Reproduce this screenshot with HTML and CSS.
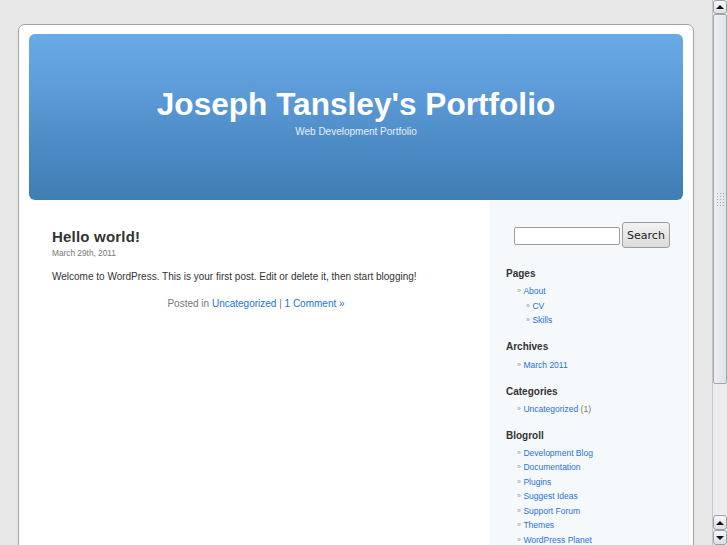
FILE: index.html
```html
<!DOCTYPE html>
<html>
<head>
<meta charset="utf-8">
<title>Joseph Tansley's Portfolio</title>
<link rel="stylesheet" href="styles.css">
</head>
<body>
<div class="viewport">
  <div class="page">
    <div class="header">
      <h1 class="site-title">Joseph Tansley's Portfolio</h1>
      <div class="site-desc">Web Development Portfolio</div>
    </div>
    <div class="body-row">
      <div class="content">
        <h2 class="post-title">Hello world!</h2>
        <div class="post-date">March 29th, 2011</div>
        <p class="post-text">Welcome to WordPress. This is your first post. Edit or delete it, then start blogging!</p>
        <p class="post-meta">Posted in <a href="#">Uncategorized</a> | <a href="#">1 Comment »</a></p>
      </div>
      <div class="sidebar">
        <form class="search">
          <input class="search-input" type="text">
          <button class="search-btn" type="button">Search</button>
        </form>
        <div class="widget">
          <h3 class="widget-title">Pages</h3>
          <ul class="list">
            <li><a href="#">About</a>
              <ul class="list sub">
                <li><a href="#">CV</a></li>
                <li><a href="#">Skills</a></li>
              </ul>
            </li>
          </ul>
        </div>
        <div class="widget">
          <h3 class="widget-title">Archives</h3>
          <ul class="list"><li><a href="#">March 2011</a></li></ul>
        </div>
        <div class="widget">
          <h3 class="widget-title">Categories</h3>
          <ul class="list"><li><a href="#">Uncategorized</a> <span class="count">(1)</span></li></ul>
        </div>
        <div class="widget">
          <h3 class="widget-title blogroll">Blogroll</h3>
          <ul class="list">
            <li><a href="#">Development Blog</a></li>
            <li><a href="#">Documentation</a></li>
            <li><a href="#">Plugins</a></li>
            <li><a href="#">Suggest Ideas</a></li>
            <li><a href="#">Support Forum</a></li>
            <li><a href="#">Themes</a></li>
            <li><a href="#">WordPress Planet</a></li>
          </ul>
        </div>
      </div>
    </div>
  </div>
</div>
<div class="scrollbar">
  <div class="sb-btn sb-up"><span class="arrow up"></span></div>
  <div class="sb-thumb"><div class="grip"></div></div>
  <div class="sb-track"></div>
  <div class="sb-btn"><span class="arrow up"></span></div>
  <div class="sb-btn"><span class="arrow down"></span></div>
</div>
</body>
</html>
```
FILE: styles.css
```css
html, body {
  margin: 0;
  padding: 0;
  height: 545px;
  overflow: hidden;
}
body {
  background: #e7e7e7;
  font-family: "Liberation Sans", Arial, sans-serif;
  display: flex;
  color: #333;
}
.viewport {
  flex: 1;
  height: 545px;
  overflow: hidden;
}
.page {
  margin: 24px 0 0 18px;
  width: 674px;
  height: 600px;
  background: #fff;
  border: 1px solid #a2a2a6;
  border-radius: 7px 7px 0 0;
  padding-top: 9px;
  box-sizing: content-box;
}
.header {
  margin: 0 10px;
  height: 166px;
  border-radius: 6px;
  background: linear-gradient(to bottom, #69aae7 0%, #5c9bd8 35%, #4a89c3 70%, #3f7db3 100%);
  text-align: center;
  color: #fff;
  overflow: hidden;
}
.site-title {
  margin: 0;
  padding-top: 52px;
  font-size: 31.6px;
  line-height: 36px;
  font-weight: bold;
  color: #fff;
}
.site-desc {
  margin-top: 4px;
  font-size: 10px;
  line-height: 12px;
  color: #e8f0fa;
}
.body-row {
  display: flex;
}
.content {
  width: 408px;
  padding: 28px 30px 0 33px;
}
.post-title {
  margin: 0;
  font-size: 15px;
  line-height: 18px;
  font-weight: bold;
  color: #333;
  letter-spacing: 0.2px;
}
.post-date {
  margin-top: 2px;
  font-size: 8.3px;
  line-height: 11px;
  color: #777;
}
.post-text {
  margin: 11px 0 0;
  font-size: 10px;
  line-height: 14px;
  color: #333;
}
.post-meta {
  margin: 13px 0 0;
  font-size: 10px;
  line-height: 14px;
  color: #777;
  text-align: center;
}
a {
  color: #2671d9;
  text-decoration: none;
}
.sidebar {
  width: 183px;
  padding: 22px 0 0 16px;
  background: #f6f9fc;
  height: 400px;
}
.search {
  margin: 0 0 0 8px;
  display: flex;
  align-items: center;
  gap: 2px;
}
.search-input {
  width: 106px;
  height: 18px;
  box-sizing: border-box;
  border: 1px solid #9c9c9c;
  border-radius: 2px;
  background: #fff;
  margin: 2px 0 0;
  padding: 0;
}
.search-btn {
  width: 48px;
  height: 26px;
  box-sizing: border-box;
  border: 1px solid #9d9d9d;
  border-radius: 3px;
  background: linear-gradient(to bottom, #f2f2f2, #dcdcdc);
  font-family: "DejaVu Sans", sans-serif;
  font-size: 11px;
  color: #222;
  padding: 0;
}
.widget {
  margin-top: 18.5px;
}
.widget + .widget {
  margin-top: 12.5px;
}
.widget-title {
  margin: 0;
  font-size: 10px;
  line-height: 14px;
  font-weight: bold;
  color: #333;
}
.list {
  list-style: none;
  margin: 3.5px 0 0;
  padding: 0 0 0 11px;
}
.list li {
  font-size: 8.5px;
  line-height: 14.5px;
}
.list li::before {
  content: "»";
  color: #999;
  font-size: 7px;
  margin-right: 2.5px;
  vertical-align: 1px;
}
.list.sub {
  margin: 0;
  padding-left: 9px;
}
.blogroll + .list {
  margin-top: 2.5px;
}
.count {
  color: #777;
}
.scrollbar {
  width: 15px;
  height: 545px;
  display: flex;
  flex-direction: column;
  background: #f1f1f3;
  border-left: 1px solid #c8c8cc;
  box-sizing: border-box;
}
.sb-btn {
  height: 15px;
  box-sizing: border-box;
  border: 1px solid #9fa0a6;
  border-radius: 3px;
  background: linear-gradient(to bottom, #f7f7f9, #dedfe4);
  display: flex;
  align-items: center;
  justify-content: center;
  flex: none;
}
.sb-up {
  height: 14px;
}
.arrow {
  width: 0;
  height: 0;
  border-left: 4px solid transparent;
  border-right: 4px solid transparent;
}
.arrow.up {
  border-bottom: 4px solid #111;
}
.arrow.down {
  border-top: 4px solid #111;
}
.sb-thumb {
  height: 370px;
  flex: none;
  box-sizing: border-box;
  border: 1px solid #a5a6ac;
  border-radius: 2px;
  background: linear-gradient(to right, #eeeff3, #e1e2e7);
  display: flex;
  align-items: center;
  justify-content: center;
}
.grip {
  width: 8px;
  height: 14px;
  background-image: radial-gradient(circle, #a9aab0 0.7px, transparent 0.9px);
  background-size: 3px 3px;
}
.sb-track {
  flex: 1;
  background-image: radial-gradient(circle, #e3e3e6 0.6px, transparent 0.8px);
  background-size: 2px 2px;
  background-color: #f6f6f7;
}
```
